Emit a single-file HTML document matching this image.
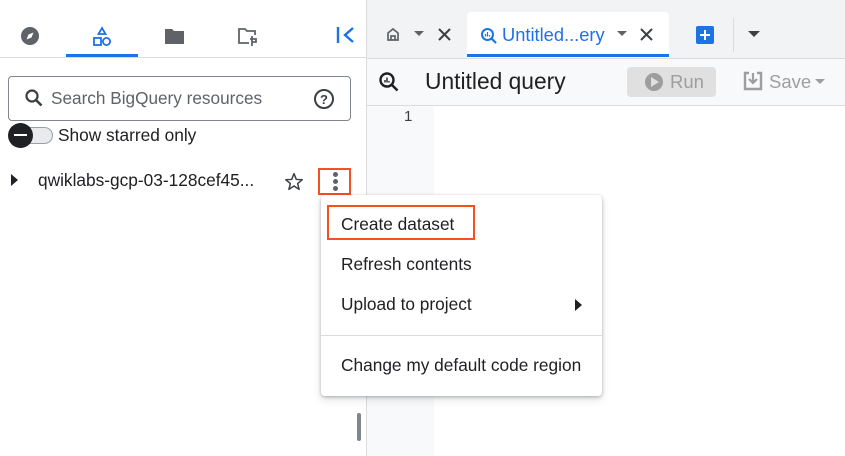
<!DOCTYPE html><html><head><style>
*{margin:0;padding:0;box-sizing:border-box}
body{width:845px;height:456px;overflow:hidden;font-family:"Liberation Sans",Arial,sans-serif;background:#fff;position:relative;color:#202124}
.a{position:absolute}
</style></head><body>
<div class="a" style="left:0;top:57px;width:366px;height:1px;background:#dadce0"></div>
<div class="a" style="left:66px;top:54px;width:72px;height:3px;background:#1a73e8"></div>
<svg class="a" style="left:20px;top:26px" width="20" height="20" viewBox="0 0 20 20"><circle cx="10" cy="10" r="9" fill="#5f6368"/><path d="M13.5 6.5 L11.5 11.5 L6.5 13.5 L8.5 8.5Z" fill="#fff"/></svg>
<svg class="a" style="left:92px;top:26px" width="20" height="22" viewBox="0 0 20 22"><path d="M10 2 L13.5 8 H6.5Z" fill="none" stroke="#1a73e8" stroke-width="1.8"/><rect x="2" y="12" width="7" height="7" fill="none" stroke="#1a73e8" stroke-width="1.8"/><circle cx="14.5" cy="15.5" r="3.6" fill="none" stroke="#1a73e8" stroke-width="1.8"/></svg>
<svg class="a" style="left:164px;top:27px" width="22" height="18" viewBox="0 0 22 18"><path d="M1 2 H8 L10 4 H20 V17 H1Z" fill="#5f6368"/></svg>
<svg class="a" style="left:237px;top:27px" width="22" height="20" viewBox="0 0 22 20"><path d="M12 16 H2 V2 H8 L10 4 H18 V8" fill="none" stroke="#5f6368" stroke-width="1.8"/><path d="M15 9 V19 M13 12 H19 V15 H15" fill="none" stroke="#5f6368" stroke-width="1.8"/></svg>
<svg class="a" style="left:336px;top:26px" width="20" height="18" viewBox="0 0 20 18"><path d="M2 1 V17" stroke="#1a73e8" stroke-width="2.4"/><path d="M17 2 L9 9 L17 16" fill="none" stroke="#1a73e8" stroke-width="2.4"/></svg>
<div class="a" style="left:8px;top:76px;width:343px;height:45px;border:1px solid #80868b;border-radius:4px"></div>
<svg class="a" style="left:24px;top:88px" width="20" height="20" viewBox="0 0 20 20"><circle cx="8" cy="8" r="5.5" fill="none" stroke="#3c4043" stroke-width="2.2"/><path d="M12 12 L17.5 17.5" stroke="#3c4043" stroke-width="2.6"/></svg>
<div class="a" style="left:51px;top:88px;font-size:17.2px;color:#5f6368">Search BigQuery resources</div>
<svg class="a" style="left:313px;top:88px" width="22" height="22" viewBox="0 0 22 22"><circle cx="11" cy="11" r="9" fill="none" stroke="#3c4043" stroke-width="2"/><text x="11" y="16" font-size="13" font-family="Liberation Sans" font-weight="bold" text-anchor="middle" fill="#3c4043">?</text></svg>
<div class="a" style="left:12px;top:127px;width:41px;height:17px;border-radius:9px;background:#e8eaed;border:1px solid #9aa0a6"></div>
<div class="a" style="left:8px;top:123px;width:25px;height:25px;border-radius:50%;background:#202124"></div>
<div class="a" style="left:14px;top:134px;width:13px;height:2px;background:#fff"></div>
<div class="a" style="left:58px;top:125px;font-size:17.3px">Show starred only</div>
<svg class="a" style="left:10px;top:173px" width="10" height="14"><path d="M1 1 L8 7 L1 13Z" fill="#202124"/></svg>
<div class="a" style="left:38px;top:170px;font-size:17.3px">qwiklabs-gcp-03-128cef45...</div>
<svg class="a" style="left:284px;top:172px" width="20" height="19" viewBox="0 0 24 23"><path d="M12 2 L14.8 9 L22 9.3 L16.4 14 L18.2 21 L12 17 L5.8 21 L7.6 14 L2 9.3 L9.2 9Z" fill="none" stroke="#3c4043" stroke-width="1.8" stroke-linejoin="round"/></svg>
<div class="a" style="left:318px;top:168px;width:33px;height:27px;border:2px solid #f4511e"></div>
<div class="a" style="left:333px;top:172px;width:5px;height:5px;border-radius:50%;background:#5f6368;box-shadow:0 7px 0 #5f6368,0 14px 0 #5f6368"></div>
<div class="a" style="left:357px;top:413px;width:4px;height:28px;border-radius:2px;background:#80868b"></div>
<div class="a" style="left:366px;top:0;width:1px;height:456px;background:#dadce0"></div>
<div class="a" style="left:367px;top:0;width:478px;height:58px;background:#f1f3f4"></div>
<div class="a" style="left:467px;top:12px;width:202px;height:46px;background:#fff;border-radius:4px 4px 0 0"></div>
<div class="a" style="left:467px;top:54px;width:202px;height:3px;background:#1a73e8"></div>
<div class="a" style="left:367px;top:58px;width:478px;height:1px;background:#dadce0"></div>
<svg class="a" style="left:386px;top:27px" width="14" height="15" viewBox="0 0 14 15"><path d="M2 6 L7 2 L12 6 V13 H2Z M5 13 V9 H9 V13" fill="none" stroke="#5f6368" stroke-width="1.7"/></svg>
<svg class="a" style="left:414px;top:31px" width="10" height="6"><path d="M0 0 H10 L5 5Z" fill="#5f6368"/></svg>
<svg class="a" style="left:437px;top:27px" width="15" height="15"><path d="M2 2 L13 13 M13 2 L2 13" stroke="#3c4043" stroke-width="2"/></svg>
<svg class="a" style="left:480px;top:27px" width="18" height="18" viewBox="0 0 18 18"><circle cx="7.5" cy="7.5" r="5.5" fill="none" stroke="#1a73e8" stroke-width="2"/><path d="M11.5 11.5 L16 16" stroke="#1a73e8" stroke-width="2.2"/><path d="M5.5 9.5V7 M7.5 9.5V5 M9.5 9.5V8" stroke="#1a73e8" stroke-width="1.2"/></svg>
<div class="a" style="left:502px;top:24px;font-size:18.3px;color:#1a73e8">Untitled...ery</div>
<svg class="a" style="left:617px;top:31px" width="10" height="6"><path d="M0 0 H10 L5 5Z" fill="#5f6368"/></svg>
<svg class="a" style="left:639px;top:27px" width="15" height="15"><path d="M2 2 L13 13 M13 2 L2 13" stroke="#3c4043" stroke-width="2"/></svg>
<div class="a" style="left:696px;top:26px;width:18px;height:18px;background:#1a73e8;border-radius:2px"></div>
<div class="a" style="left:700px;top:34px;width:10px;height:2px;background:#fff"></div>
<div class="a" style="left:704px;top:30px;width:2px;height:10px;background:#fff"></div>
<div class="a" style="left:733px;top:18px;width:1px;height:34px;background:#dadce0"></div>
<svg class="a" style="left:748px;top:31px" width="12" height="6"><path d="M0 0 H12 L6 6Z" fill="#3c4043"/></svg>
<div class="a" style="left:367px;top:59px;width:478px;height:46px;background:#f8f9fa"></div>
<div class="a" style="left:367px;top:105px;width:478px;height:1px;background:#dadce0"></div>
<svg class="a" style="left:378px;top:71px" width="22" height="22" viewBox="0 0 22 22"><circle cx="9" cy="9" r="6.5" fill="none" stroke="#202124" stroke-width="2.4"/><path d="M14 14 L19.5 19.5" stroke="#202124" stroke-width="2.6"/><path d="M7 11.5V9 M9 11.5V6.5 M11 11.5V10" stroke="#202124" stroke-width="1.4"/></svg>
<div class="a" style="left:425px;top:68px;font-size:22.8px;color:#202124">Untitled query</div>
<div class="a" style="left:627px;top:67px;width:89px;height:30px;background:#e0e0e0;border-radius:4px"></div>
<div class="a" style="left:645px;top:73px;width:18px;height:18px;border-radius:50%;background:#9e9e9e"></div>
<svg class="a" style="left:651px;top:77px" width="8" height="10"><path d="M0 0 L8 5 L0 10Z" fill="#e0e0e0"/></svg>
<div class="a" style="left:670px;top:71px;font-size:18.5px;color:#9e9e9e">Run</div>
<svg class="a" style="left:743px;top:71px" width="20" height="20" viewBox="0 0 20 20"><path d="M6 2 H2 V18 H18 V2 H14" fill="none" stroke="#9e9e9e" stroke-width="2.4"/><path d="M10 2 V11 M6 8 L10 12 L14 8" fill="none" stroke="#9e9e9e" stroke-width="2.2"/></svg>
<div class="a" style="left:769px;top:71px;font-size:18.5px;color:#9e9e9e">Save</div>
<svg class="a" style="left:815px;top:79px" width="10" height="5"><path d="M0 0 H10 L5 5Z" fill="#9e9e9e"/></svg>
<div class="a" style="left:367px;top:106px;width:67px;height:350px;background:#f8f9fa"></div>
<div class="a" style="left:404px;top:108px;font-size:15px;color:#3c4043">1</div>
<div class="a" style="left:321px;top:195px;width:281px;height:201px;background:#fff;border-radius:4px;box-shadow:0 1px 3px rgba(60,64,67,.35),0 4px 8px rgba(60,64,67,.15)"></div>
<div class="a" style="left:327px;top:205px;width:148px;height:35px;border:2px solid #f4511e"></div>
<div class="a" style="left:341px;top:214px;font-size:17.3px">Create dataset</div>
<div class="a" style="left:341px;top:254px;font-size:17.3px">Refresh contents</div>
<div class="a" style="left:341px;top:294px;font-size:17.3px">Upload to project</div>
<svg class="a" style="left:575px;top:299px" width="8" height="12"><path d="M0 0 L7 6 L0 12Z" fill="#202124"/></svg>
<div class="a" style="left:321px;top:335px;width:281px;height:1px;background:#dadce0"></div>
<div class="a" style="left:341px;top:355px;font-size:17.3px">Change my default code region</div>
</body></html>
